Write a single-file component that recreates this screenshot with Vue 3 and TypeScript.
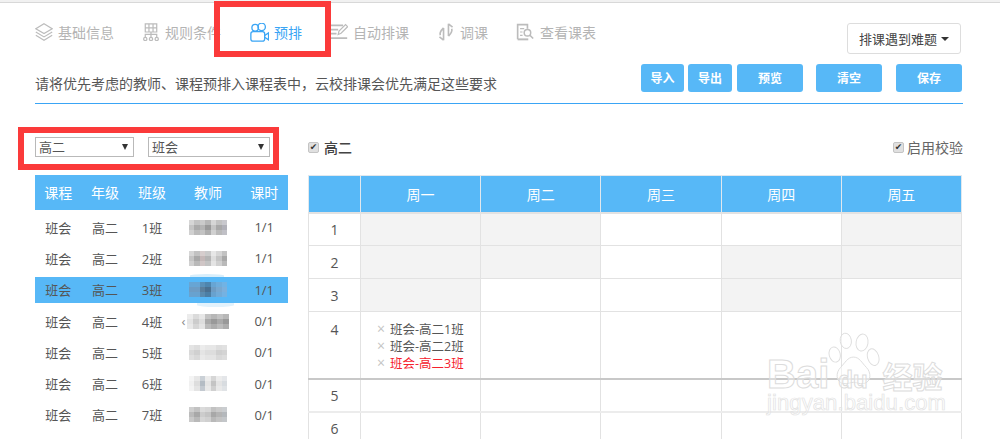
<script setup lang="ts">
const navItems = [
  { key: 'layers', label: '基础信息', width: 107 },
  { key: 'rules', label: '规则条件', width: 106 },
  { key: 'cam', label: '预排', width: 82, active: true },
  { key: 'auto', label: '自动排课', width: 107 },
  { key: 'swap', label: '调课', width: 79 },
  { key: 'view', label: '查看课表', width: 90 },
]
const actions = [
  { label: '导入', w: 43, gap: 4 },
  { label: '导出', w: 44, gap: 5 },
  { label: '预览', w: 66, gap: 13 },
  { label: '清空', w: 66, gap: 14 },
  { label: '保存', w: 66, gap: 0 },
]
const mosaics = [
  { w: 38, c: ['#c4c4c4', '#aaa', '#b4b4b4', '#999', '#c4c4c4', '#a8a8a8', '#b0b0b8'] },
  { w: 38, c: ['#c4c4c4', '#a8a8a8', '#c4b8b8', '#b4b4b4', '#ddd', '#c4c4c4', '#a8a8a8'] },
  { w: 38, c: ['#6d9cc4', '#6d9cc4', '#5b7f9c', '#4a7090', '#6d9cc4', '#78a8d0', '#7cb0dc'] },
  { w: 42, c: ['#e4e4e4', '#ccc', '#ddd', '#aaa', '#999', '#aaa', '#999'] },
  { w: 38, c: ['#d8d8d8', '#d0d0d0', '#e4e4e4', '#ddd', '#ddd', '#d0d0d0', '#d4d4d4'] },
  { w: 38, c: ['#f0f0f0', '#ddd', '#b4bcc4', '#e4e4e4', '#c4c4c4', '#e4e4e4', '#d8dce0'] },
  { w: 38, c: ['#bbb', '#a8a8a8', '#ccc', '#c4c4c4', '#a8a8a8', '#b4b4b4', '#b4b8bc'] },
]
const bands = [0.7, 1, 0.8]
const rows = [
  { cls: '1班', hours: '1/1' },
  { cls: '2班', hours: '1/1' },
  { cls: '3班', hours: '1/1', on: true },
  { cls: '4班', hours: '0/1', lead: true },
  { cls: '5班', hours: '0/1' },
  { cls: '6班', hours: '0/1' },
  { cls: '7班', hours: '0/1' },
].map((r, i) => ({
  ...r,
  width: mosaics[i].w,
  cells: bands.flatMap((o) => mosaics[i].c.map((bg) => ({ bg, o }))),
}))
const days = ['周一', '周二', '周三', '周四', '周五']
const grid = [
  { n: 1, gray: [0, 1, 4], cls: 'r33' },
  { n: 2, gray: [0, 1, 3, 4], cls: 'r33' },
  { n: 3, gray: [0, 3], cls: 'r33' },
  { n: 4, gray: [], cls: 'r4' },
  { n: 5, gray: [], cls: 'r5' },
  { n: 6, gray: [], cls: 'r33' },
]
const tags = [
  { t: '班会-高二1班' },
  { t: '班会-高二2班' },
  { t: '班会-高二3班', red: true },
]
</script>

<template>
  <div class="page">
    <div class="topline"></div>
    <div class="head">
      <nav class="nav">
        <div
          v-for="item in navItems"
          :key="item.key"
          class="nav-item"
          :class="[item.key, { active: item.active }]"
          :style="{ width: item.width + 'px' }"
        >
          <svg class="ico" viewBox="1 1 22 22" fill="none" stroke="currentColor" stroke-width="1.5">
            <template v-if="item.key === 'layers'">
              <path d="M12 2 22 8 12 14 2 8Z" />
              <path d="M2 12 12 18 22 12" />
              <path d="M2 16 12 22 22 16" />
            </template>
            <template v-else-if="item.key === 'rules'">
              <path d="M5 2h14v10H5zM9.500 2v10M14.500 2v10M5 7h14" />
              <path d="M5 19v-4h14v4M12 12v7" />
              <circle cx="5" cy="20.500" r="2" />
              <circle cx="12" cy="20.500" r="2" />
              <circle cx="19" cy="20.500" r="2" />
            </template>
            <template v-else-if="item.key === 'cam'">
              <circle cx="7" cy="6.500" r="3.800" />
              <circle cx="14.500" cy="5.500" r="4.300" />
              <rect x="2" y="11" width="16" height="11" rx="2.500" />
              <path d="M18 15.500l4.500-3v8l-4.500-3" />
            </template>
            <template v-else-if="item.key === 'auto'">
              <path d="M2 4h15M2 9h9M2 14h7M2 19.500h20" stroke-width="2.200" />
              <path d="M11 15l1-4 8-8 2.500 2.500-8 8z" />
            </template>
            <template v-else-if="item.key === 'swap'">
              <path d="M9 7c-3 3-5 6-4 9M9 7v15M9 22l-5-4" stroke-width="2" />
              <path d="M15 17c3-3 5-6 4-9M15 17V2M15 2l5 4" stroke-width="2" />
            </template>
            <template v-else>
              <path d="M3 21V3h12v5" stroke-width="2" />
              <path d="M3 21h13" stroke-width="2.400" />
              <path d="M6 8h5M6 12h3M6 16h3" />
              <circle cx="15" cy="13" r="4" stroke-width="1.800" />
              <path d="M18 16l4 4" stroke-width="2" />
            </template>
          </svg>
          <span>{{ item.label }}</span>
        </div>
      </nav>
      <div class="trouble">排课遇到难题<i class="caret"></i></div>
    </div>
    <div class="notice">
      <p>请将优先考虑的教师、课程预排入课程表中，云校排课会优先满足这些要求</p>
      <div class="actions">
        <button
          v-for="a in actions"
          :key="a.label"
          :style="{ width: a.w + 'px', marginRight: a.gap + 'px' }"
        >{{ a.label }}</button>
      </div>
    </div>
    <main class="body">
      <section class="left">
        <div class="filters">
          <div class="sel s1">高二<i></i></div>
          <div class="sel s2">班会<i></i></div>
        </div>
        <table class="list">
          <colgroup>
            <col class="c1" /><col class="c2" /><col class="c2" /><col class="c4" /><col />
          </colgroup>
          <thead>
            <tr><th>课程</th><th>年级</th><th>班级</th><th>教师</th><th>课时</th></tr>
          </thead>
          <tbody>
            <tr v-for="r in rows" :key="r.cls" :class="{ on: r.on }">
              <td>班会</td>
              <td>高二</td>
              <td>{{ r.cls }}</td>
              <td>
                <div class="mosaic-wrap">
                  <span v-if="r.lead" class="lead">‹</span>
                  <div class="mosaic" :style="{ width: r.width + 'px' }">
                    <b v-for="(c, i) in r.cells" :key="i" :style="{ background: c.bg, opacity: c.o }"></b>
                  </div>
                </div>
              </td>
              <td>{{ r.hours }}</td>
            </tr>
          </tbody>
        </table>
      </section>
      <section class="right">
        <div class="right-top">
          <label class="chk strong"><span class="box">✔</span>高二</label>
          <label class="chk tight"><span class="box">✔</span>启用校验</label>
        </div>
        <table class="sched">
          <thead>
            <tr><th class="first"></th><th v-for="d in days" :key="d">{{ d }}</th></tr>
          </thead>
          <tbody>
            <tr v-for="row in grid" :key="row.n" :class="row.cls">
              <td class="num">{{ row.n }}</td>
              <td v-for="(d, i) in days" :key="d" :class="{ gray: row.gray.includes(i) }">
                <template v-if="row.n === 4 && i === 0">
                  <div v-for="t in tags" :key="t.t" class="tag" :class="{ red: t.red }">
                    <span class="x">×</span><span>{{ t.t }}</span>
                  </div>
                </template>
              </td>
            </tr>
          </tbody>
        </table>
      </section>
    </main>

    <div class="red-box nav-box"></div>
    <div class="red-box filter-box"></div>
    <div class="halo h1"></div>
    <div class="halo h2"></div>

    <div class="mark" aria-hidden="true">
      <svg class="paw" viewBox="0 0 62 66" fill="rgba(255,255,255,.5)" stroke="#ddd" stroke-width="1.100">
        <ellipse cx="9" cy="26" rx="6.500" ry="9" transform="rotate(-15 9 26)" />
        <ellipse cx="22" cy="10" rx="6.500" ry="9" transform="rotate(-8 22 10)" />
        <ellipse cx="41" cy="12" rx="7" ry="10" transform="rotate(10 41 12)" />
        <ellipse cx="54" cy="29" rx="6.500" ry="10" transform="rotate(-18 54 29)" />
        <path d="M31 29c7 0 10 7 15 12 6 6 6 17-3 19-5 1-8-1.500-12-1.500S24 61 19 60c-9-2-9-13-3-19 5-5 8-12 15-12Z" />
      </svg>
      <div class="mark-a"><span>Bai</span><span class="du">du</span><span class="jy">经验</span></div>
      <div class="mark-b">jingyan.baidu.com</div>
    </div>
  </div>
</template>

<style scoped>
.page {
  position: relative;
  width: 1000px;
  height: 439px;
  overflow: hidden;
  background: #fff;
  color: #555;
  font-family: "Open Sans", "Noto Sans CJK SC", sans-serif;
  font-size: 13px;
}
.topline { height: 3px; background: #f1f1f1; border-bottom: 1px solid #d8d8d8; box-sizing: border-box; }
.head {
  height: 31px;
  padding: 20px 39px 0 35px;
  display: flex;
  justify-content: space-between;
}
.nav { display: flex; margin-top: -1px; height: 20px; }
.nav-item { display: flex; align-items: center; gap: 5px; font-size: 14px; color: #b4b4b4; white-space: nowrap; }
.nav-item.active { color: #3aa5f5; padding-left: 2px; box-sizing: border-box; }
.nav-item.view { gap: 6px; }
.ico { width: 18px; height: 18px; flex: none; color: #bcbcbc; }
.active .ico { width: 19px; height: 19px; color: #3aa5f5; }
.trouble {
  width: 114px;
  height: 31px;
  box-sizing: border-box;
  border: 1px solid #ddd;
  border-radius: 3px;
  display: flex;
  align-items: center;
  justify-content: center;
  color: #444;
  font-size: 13px;
}
.caret { width: 0; height: 0; margin-left: 4px; border: 4px solid transparent; border-top-color: #333; border-bottom: 0; }
.notice {
  margin: 10px 37px 0 35px;
  height: 39px;
  border-bottom: 1px solid #3aa5f5;
  display: flex;
  justify-content: space-between;
}
.notice p { margin: 9px 0 0; font-size: 14px; line-height: 22px; color: #555; white-space: nowrap; }
.actions { display: flex; margin-right: 1px; height: 28px; }
.actions button {
  height: 28px;
  padding: 0;
  border: 0;
  border-radius: 3px;
  background: #57b8f7;
  color: #fff;
  font: 700 12px "Open Sans", "Noto Sans CJK SC", sans-serif;
}
.body { display: flex; padding: 0 37px 0 35px; }
.left { width: 253px; margin-right: 20px; flex: none; }
.filters { display: flex; gap: 14px; padding-top: 33px; height: 38px; }
.sel {
  position: relative;
  height: 20px;
  box-sizing: border-box;
  border: 1px solid #b9b9b9;
  padding-left: 3px;
  color: #555;
  font-size: 13px;
  line-height: 18px;
}
.s1 { width: 99px; }
.s2 { width: 122px; }
.sel i {
  position: absolute;
  right: 5px;
  top: 6px;
  width: 0;
  height: 0;
  border: 3.500px solid transparent;
  border-top: 6px solid #333;
  border-bottom: 0;
}
.list {
  width: 253px;
  margin-top: -5px;
  border-collapse: separate;
  border-spacing: 0 5px;
  table-layout: fixed;
}
.c1 { width: 46.500px; }
.c2 { width: 47px; }
.c4 { width: 65px; }
.list th {
  height: 34px;
  padding: 0;
  background: #57b8f7;
  box-shadow: 0 1px 0 #57b8f7;
  color: #fff;
  font-size: 14px;
  font-weight: 400;
}
.list td { height: 26.300px; padding: 0; text-align: center; font-size: 13px; color: #555; }
.list tr.on td { background: #57b8f7; }
.mosaic-wrap { position: relative; display: flex; justify-content: center; }
.lead { position: absolute; left: 6px; top: -3px; font-size: 13px; color: #888; line-height: 20px; }
.mosaic {
  display: grid;
  grid-template-columns: repeat(7, 1fr);
  grid-auto-rows: 5px;
  height: 15px;
  filter: blur(.7px);
}
.mosaic b { display: block; }
.right { flex: 1; min-width: 0; }
.right-top { display: flex; justify-content: space-between; height: 71px; box-sizing: border-box; padding-top: 31px; }
.chk { display: flex; align-items: center; height: 24px; font-size: 14px; color: #555; }
.strong { color: #444; gap: 5px; font-weight: 500; }
.tight { gap: 3px; color: #666; }
.box {
  flex: none;
  box-sizing: border-box;
  width: 11px;
  height: 11px;
  border: 1px solid #c4c4c4;
  border-radius: 2px;
  background: #e0e0e0;
  color: #333;
  font: 9px/9px "DejaVu Sans", sans-serif;
  text-align: center;
}
.sched { width: 654px; border-collapse: collapse; table-layout: fixed; }
.sched th, .sched td { border: 1px solid #e2e2e2; padding: 0; box-sizing: border-box; }
.sched th {
  height: 37px;
  background: #57b8f7;
  border-color: #e0e8ee;
  border-bottom: 2px solid #e2e2e2;
  color: #fff;
  font-size: 14px;
  font-weight: 400;
}
.first { width: 52px; }
.num { text-align: center; color: #555; font-size: 14px; }
.r33 td { height: 33px; }
.r4 td { height: 67px; border-bottom: 2px solid #c8c8c8; vertical-align: top; }
.r5 td { height: 33px; border-bottom: 2px solid #ececec; }
.r4 .num { padding-top: 8px; }
.gray { background: #f3f3f3; }
.tag { display: flex; align-items: center; height: 17px; padding-left: 16px; font-size: 12.500px; color: #555; white-space: nowrap; overflow: hidden; }
.tag:first-child { margin-top: 8px; }
.tag.red { color: #f5212d; }
.x { flex: none; width: 13px; color: #c4c4c4; font-size: 14px; line-height: 17px; }

.red-box { position: absolute; box-sizing: border-box; border: 6px solid #fb3a3a; }
.nav-box { left: 214px; top: 1px; width: 117px; height: 56px; }
.filter-box { left: 18px; top: 127px; width: 261px; height: 43px; }
.halo { position: absolute; background: #d8eefb; }
.h1 { left: 190px; top: 274px; width: 34px; height: 3px; border-radius: 60% 60% 0 0; }
.h2 { left: 197px; top: 303px; width: 37px; height: 4px; border-radius: 0 0 60% 60%; background: #e2f2fc; }

.mark { position: absolute; left: 764px; top: 330px; width: 190px; height: 100px; color: rgba(255,255,255,.35); pointer-events: none; }
.paw { position: absolute; left: 63px; top: 2px; width: 53px; height: 57px; }
.mark-a {
  position: absolute;
  left: 3px;
  top: 27px;
  display: flex;
  align-items: baseline;
  font: 700 40px/34px "Liberation Sans", sans-serif;
  -webkit-text-stroke: 1px #dcdcdc;
}
.du { font-size: 24px; margin-left: 9px; }
.jy { font: 700 30px/34px "Noto Sans CJK SC", sans-serif; margin-left: 15px; }
.mark-b {
  position: absolute;
  left: 3px;
  top: 61px;
  font: 400 22px/24px "Liberation Sans", sans-serif;
  letter-spacing: .1px;
  -webkit-text-stroke: .7px #e2e2e2;
  white-space: nowrap;
}
</style>
